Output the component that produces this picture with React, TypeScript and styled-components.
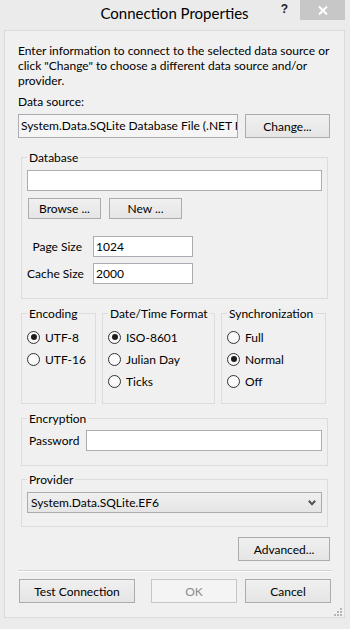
import React from "react";
import styled, { createGlobalStyle } from "styled-components";

const GlobalStyle = createGlobalStyle`
  html, body {
    margin: 0;
    padding: 0;
    background: #ebebeb;
  }
  body {
    font-family: Lato, "Noto Sans", "Liberation Sans", sans-serif;
    font-size: 12px;
    color: #000;
  }
`;

const Window = styled.div`
  width: 350px;
  height: 629px;
  box-sizing: border-box;
  padding: 0 5px 0 4px;
  background: #ebebeb;
  display: flex;
  flex-direction: column;
`;

const TitleBar = styled.div`
  height: 30px;
  display: grid;
  grid-template-columns: 66px 1fr 66px;
  align-items: start;
`;

const Title = styled.div`
  grid-column: 2;
  text-align: center;
  font-size: 15px;
  line-height: 26px;
  color: #000;
`;

const Controls = styled.div`
  display: flex;
  align-items: flex-start;
  justify-content: flex-end;
`;

const HelpGlyph = styled.span`
  font-family: "Liberation Sans", sans-serif;
  font-weight: bold;
  font-size: 12px;
  line-height: 14px;
  margin: 2px 12px 0 0;
  color: #222;
`;

const CloseButton = styled.div`
  width: 45px;
  height: 20px;
  background: #c7c7c7;
  display: flex;
  align-items: center;
  justify-content: center;
`;

const Client = styled.div`
  position: relative;
  height: 588px;
  box-sizing: border-box;
  border: 1px solid #dadada;
  background: #f0f0f0;
  padding: 12px 12px 0 13px;
  display: flex;
  flex-direction: column;
`;

const Intro = styled.p`
  margin: 0;
  line-height: 15px;
  white-space: nowrap;
`;

const Caption = styled.div`
  margin-top: 6px;
  line-height: 15px;
`;

const SourceRow = styled.div`
  margin-top: 5px;
  display: flex;
  gap: 7px;
`;

const TextBox = styled.div<{ $width?: number; $height?: number; $readOnly?: boolean }>`
  ${(p) => (p.$width ? `width: ${p.$width}px;` : "flex: 1 1 auto;")}
  height: ${(p) => p.$height ?? 21}px;
  flex-shrink: 0;
  box-sizing: border-box;
  border: 1px solid #abadb3;
  background: ${(p) => (p.$readOnly ? "#f5f5f5" : "#fff")};
  padding: 0 2px;
  line-height: ${(p) => (p.$height ?? 21) - 2}px;
  white-space: nowrap;
  overflow: hidden;
`;

const Button = styled.div<{ $width: number; $height?: number; $disabled?: boolean }>`
  width: ${(p) => p.$width}px;
  height: ${(p) => p.$height ?? 24}px;
  box-sizing: border-box;
  border: 1px solid ${(p) => (p.$disabled ? "#c6c6c6" : "#acacac")};
  background: ${(p) =>
    p.$disabled ? "#f4f4f4" : "linear-gradient(#f0f0f0, #e5e5e5)"};
  color: ${(p) => (p.$disabled ? "#8b8b8b" : "#000")};
  display: flex;
  align-items: center;
  justify-content: center;
  white-space: nowrap;
`;

const Group = styled.fieldset<{ $width?: number; $pb?: number }>`
  margin: 0;
  ${(p) => (p.$width ? `width: ${p.$width}px;` : "")}
  box-sizing: border-box;
  border: 1px solid #dcdcdc;
  padding: 0 5px ${(p) => p.$pb ?? 14}px 5px;
  min-width: 0;
`;

const Legend = styled.legend`
  padding: 0 2px;
  line-height: 15px;
  white-space: nowrap;
`;

const WideGroup = styled(Group)<{ $top: number }>`
  margin: ${(p) => p.$top}px 4px 0 3px;
`;

const DbPathBox = styled(TextBox)`
  margin-top: 5px;
`;

const ButtonRow = styled.div`
  margin: 7px 0 0 1px;
  display: flex;
  gap: 8px;
`;

const FieldRow = styled.div<{ $top: number }>`
  margin-top: ${(p) => p.$top}px;
  display: flex;
  align-items: center;
`;

const FieldLabel = styled.span<{ $width: number; $align?: string }>`
  width: ${(p) => p.$width}px;
  flex-shrink: 0;
  text-align: ${(p) => p.$align ?? "right"};
  white-space: nowrap;
  box-sizing: border-box;
  padding-left: ${(p) => (p.$align === "left" ? 2 : 0)}px;
  margin-right: ${(p) => (p.$align === "left" ? 0 : 11)}px;
`;

const OptionsRow = styled.div`
  margin: 7px 4px 0 3px;
  display: flex;
  gap: 6px;
`;

const RadioList = styled.div`
  margin-top: 5px;
  display: flex;
  flex-direction: column;
`;

const RadioItem = styled.label`
  height: 22px;
  display: flex;
  align-items: center;
  gap: 5px;
  white-space: nowrap;
`;

const RadioDot = styled.span<{ $checked?: boolean }>`
  width: 13px;
  height: 13px;
  flex-shrink: 0;
  box-sizing: border-box;
  border-radius: 50%;
  border: 1px solid #333;
  background: radial-gradient(circle at 50% 40%, #fff, #f2f2f2);
  display: flex;
  align-items: center;
  justify-content: center;
  &::after {
    content: "";
    width: 6px;
    height: 6px;
    border-radius: 50%;
    background: ${(p) => (p.$checked ? "#1c1c1c" : "transparent")};
  }
`;

const ComboBox = styled.div`
  margin-top: 5px;
  height: 21px;
  box-sizing: border-box;
  border: 1px solid #acacac;
  background: linear-gradient(#f0f0f0, #e5e5e5);
  padding: 0 5px 0 3px;
  display: flex;
  align-items: center;
  justify-content: space-between;
`;

const AdvancedRow = styled.div`
  margin: 10px 2px 0 0;
  display: flex;
  justify-content: flex-end;
`;

const Separator = styled.div`
  margin-top: 9px;
  height: 1px;
  border-top: 1px solid #d3d3d3;
  background: #fff;
`;

const Footer = styled.div`
  margin: 7px 1px 0 1px;
  display: flex;
  justify-content: space-between;
`;

const FooterRight = styled.div`
  display: flex;
  gap: 8px;
`;

const Grip = styled.svg`
  position: absolute;
  right: 2px;
  bottom: 1px;
`;

type RadioOption = { label: string; checked?: boolean };

function RadioGroup({ title, width, options }: { title: string; width: number; options: RadioOption[] }) {
  return (
    <Group $width={width} $pb={11}>
      <Legend>{title}</Legend>
      <RadioList>
        {options.map((o) => (
          <RadioItem key={o.label}>
            <RadioDot $checked={o.checked} />
            {o.label}
          </RadioItem>
        ))}
      </RadioList>
    </Group>
  );
}

export default function App() {
  return (
    <>
      <GlobalStyle />
      <Window>
        <TitleBar>
          <Title>Connection Properties</Title>
          <Controls>
            <HelpGlyph>?</HelpGlyph>
            <CloseButton>
              <svg width="10" height="9" viewBox="0 0 10 9">
                <path d="M1 0.5 L9 8.5 M9 0.5 L1 8.5" stroke="#fff" strokeWidth="2" />
              </svg>
            </CloseButton>
          </Controls>
        </TitleBar>
        <Client>
          <Intro>
            Enter information to connect to the selected data source or
            <br />
            click "Change" to choose a different data source and/or
            <br />
            provider.
          </Intro>
          <Caption>Data source:</Caption>
          <SourceRow>
            <TextBox $width={220} $height={24} $readOnly>
              System.Data.SQLite Database File (.NET Framework Data Provider for SQLite)
            </TextBox>
            <Button $width={85}>Change...</Button>
          </SourceRow>

          <WideGroup $top={12}>
            <Legend>Database</Legend>
            <DbPathBox />
            <ButtonRow>
              <Button $width={73} $height={21}>Browse ...</Button>
              <Button $width={73} $height={21}>New ...</Button>
            </ButtonRow>
            <FieldRow $top={17}>
              <FieldLabel $width={55}>Page Size</FieldLabel>
              <TextBox $width={100}>1024</TextBox>
            </FieldRow>
            <FieldRow $top={6}>
              <FieldLabel $width={55}>Cache Size</FieldLabel>
              <TextBox $width={100}>2000</TextBox>
            </FieldRow>
          </WideGroup>

          <OptionsRow>
            <RadioGroup
              title="Encoding"
              width={75}
              options={[{ label: "UTF-8", checked: true }, { label: "UTF-16" }]}
            />
            <RadioGroup
              title="Date/Time Format"
              width={113}
              options={[{ label: "ISO-8601", checked: true }, { label: "Julian Day" }, { label: "Ticks" }]}
            />
            <RadioGroup
              title="Synchronization"
              width={105}
              options={[{ label: "Full" }, { label: "Normal", checked: true }, { label: "Off" }]}
            />
          </OptionsRow>

          <WideGroup $top={7}>
            <Legend>Encryption</Legend>
            <FieldRow $top={4}>
              <FieldLabel $width={59} $align="left">Password</FieldLabel>
              <TextBox />
            </FieldRow>
          </WideGroup>

          <WideGroup $top={6} $pb={13}>
            <Legend>Provider</Legend>
            <ComboBox>
              <span>System.Data.SQLite.EF6</span>
              <svg width="8" height="6" viewBox="0 0 8 6">
                <path d="M0.8 0.8 L4 4.2 L7.2 0.8" stroke="#555" strokeWidth="2" fill="none" />
              </svg>
            </ComboBox>
          </WideGroup>

          <AdvancedRow>
            <Button $width={92}>Advanced...</Button>
          </AdvancedRow>
          <Separator />
          <Footer>
            <Button $width={116}>Test Connection</Button>
            <FooterRight>
              <Button $width={86} $disabled>OK</Button>
              <Button $width={86}>Cancel</Button>
            </FooterRight>
          </Footer>

          <Grip width="8" height="8" viewBox="0 0 8 8">
            {[
              [6, 0],
              [3, 3],
              [6, 3],
              [0, 6],
              [3, 6],
              [6, 6],
            ].map(([x, y]) => (
              <rect key={`${x}-${y}`} x={x} y={y} width="2" height="2" fill="#b5b5b5" />
            ))}
          </Grip>
        </Client>
      </Window>
    </>
  );
}
